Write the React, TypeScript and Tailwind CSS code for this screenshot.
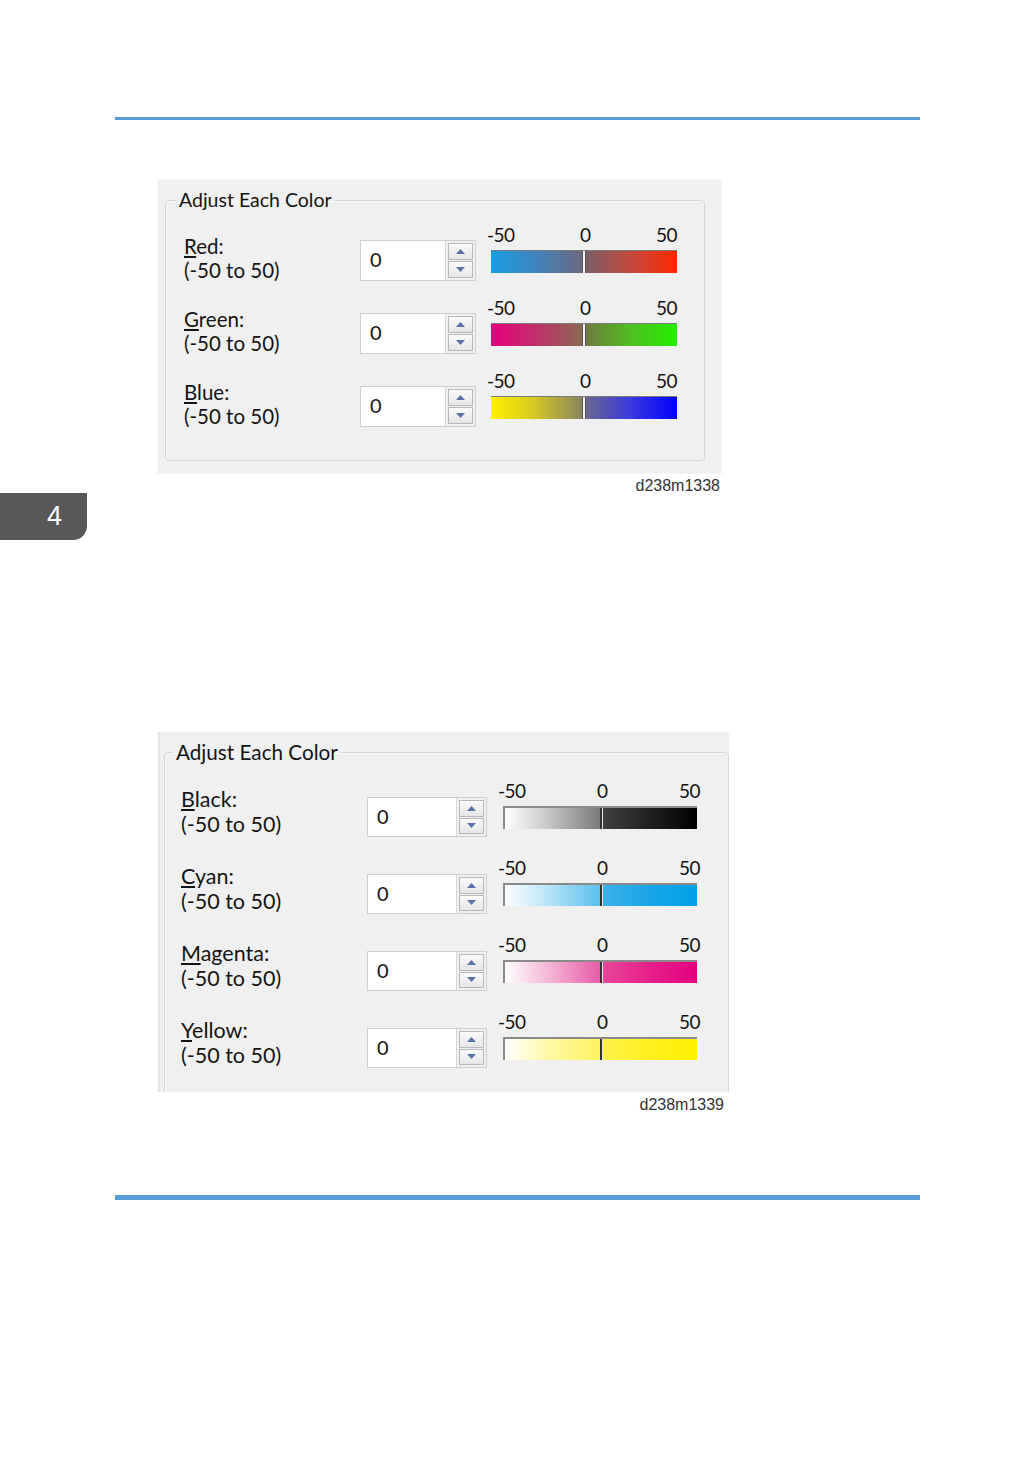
import React from 'react';

type Row = {
  key: string;
  rest: string;
  left: string;
  right: string;
};

const rgbRows: Row[] = [
  {
    key: 'R',
    rest: 'ed:',
    left: 'bg-[linear-gradient(to_right,#169fe4,#3d86c0_45%,#6a6880)]',
    right: 'bg-[linear-gradient(to_right,#7a5e66,#c4483c_50%,#ff2800)]',
  },
  {
    key: 'G',
    rest: 'reen:',
    left: 'bg-[linear-gradient(to_right,#e6007e,#c0306a_50%,#8a6a50)]',
    right: 'bg-[linear-gradient(to_right,#707a40,#50c020_50%,#22f000)]',
  },
  {
    key: 'B',
    rest: 'lue:',
    left: 'bg-[linear-gradient(to_right,#fff000,#d8cc20_45%,#8a8460)]',
    right: 'bg-[linear-gradient(to_right,#6a6890,#3838e0_50%,#0000ff)]',
  },
];

const cmykRows: Row[] = [
  {
    key: 'B',
    rest: 'lack:',
    left: 'bg-[linear-gradient(to_right,#ffffff,#c8c8c8_45%,#7a7a7a)]',
    right: 'bg-[linear-gradient(to_right,#404040,#202020_50%,#000000)]',
  },
  {
    key: 'C',
    rest: 'yan:',
    left: 'bg-[linear-gradient(to_right,#ffffff,#b8e4f8_45%,#5cc0ec)]',
    right: 'bg-[linear-gradient(to_right,#3cb0e8,#18a6e8_50%,#00a0e9)]',
  },
  {
    key: 'M',
    rest: 'agenta:',
    left: 'bg-[linear-gradient(to_right,#ffffff,#f4b8d8_45%,#e85ca8)]',
    right: 'bg-[linear-gradient(to_right,#e8469a,#e6208a_50%,#e4007f)]',
  },
  {
    key: 'Y',
    rest: 'ellow:',
    left: 'bg-[linear-gradient(to_right,#ffffff,#fff8a8_45%,#fff35c)]',
    right: 'bg-[linear-gradient(to_right,#fff24a,#fff020_50%,#fff000)]',
  },
];

function Spinner({ w, h }: { w: string; h: string }) {
  return (
    <div className={`${w} ${h} flex bg-white border border-[#cfcfcf]`}>
      <div className="flex-1 pl-[9px] pt-[6px] text-[20px] leading-[24px] text-[#141414]">0</div>
      <div className="w-[30px] flex flex-col gap-[1px] p-[2px] bg-[#f0f0f0] border-l border-[#d8d8d8]">
        <div className="flex-1 flex items-center justify-center border border-[#b8b8b8] bg-[linear-gradient(#fafafa,#e6e6e6)]">
          <svg width="9" height="5" viewBox="0 0 9 5">
            <path d="M0 5 L4.5 0 L9 5 Z" fill="#5a72a8" />
          </svg>
        </div>
        <div className="flex-1 flex items-center justify-center border border-[#b8b8b8] bg-[linear-gradient(#fafafa,#e6e6e6)]">
          <svg width="9" height="5" viewBox="0 0 9 5">
            <path d="M0 0 L4.5 5 L9 0 Z" fill="#5a72a8" />
          </svg>
        </div>
      </div>
    </div>
  );
}

function Scale({ row, sunken, colW, barW, barMl }: { row: Row; sunken: boolean; colW: string; barW: string; barMl: string }) {
  return (
    <div className={`${colW} flex flex-col`}>
      <div className="flex justify-between text-[19px] leading-[20px] text-[#141414] tracking-[-0.5px]">
        <span>-50</span>
        <span>0</span>
        <span>50</span>
      </div>
      <div
        className={`${barW} ${barMl} mt-[5px] h-[23px] flex ${
          sunken ? 'border-t-2 border-l-2 border-[#8a8a8a]' : 'border-t border-[#7a7a7a]'
        }`}
      >
        <div className={`flex-1 ${row.left}`} />
        {sunken ? (
          <div className="w-[3px] bg-[#e8e8e8] border-l-2 border-[#333333]" />
        ) : (
          <div className="w-[4px] bg-[#f4f4f4] border-x border-[#555555]" />
        )}
        <div className={`flex-1 ${row.right}`} />
      </div>
    </div>
  );
}

function Label({ row, w, mt, size }: { row: Row; w: string; mt: string; size: string }) {
  return (
    <div className={`${w} ${mt} ${size} text-[#141414]`}>
      <div>
        <span className="underline underline-offset-2">{row.key}</span>
        {row.rest}
      </div>
      <div>(-50 to 50)</div>
    </div>
  );
}

export default function App() {
  const font = { fontFamily: 'Lato, "Open Sans", sans-serif' };
  return (
    <div className="w-[1036px] h-[1470px] bg-white overflow-hidden flex flex-col" style={font}>
      <div className="mt-[117px] ml-[115px] w-[805px] h-[3px] bg-[#5b9bd5]" />

      {/* RGB panel */}
      <div className="mt-[59px] ml-[157px] w-[565px] h-[295px] bg-[#f0f0f0] border border-[#f6f6f6] pt-[8px] pl-[7px] pr-[16px]">
        <fieldset className="h-[273px] border border-[#d6d6d6] rounded-[4px] shadow-[inset_1px_1px_0_#fbfbfb] pl-[18px] pt-[13px]">
          <legend className="ml-[-8px] px-[3px] text-[19.5px] leading-[24px] text-[#141414]">
            Adjust Each Color
          </legend>
          <div className="flex flex-col">
            {rgbRows.map((row) => (
              <div key={row.key} className="h-[73px] flex items-start">
                <Label row={row} w="w-[176px]" mt="mt-[9px]" size="text-[20.5px] leading-[24px]" />
                <div className="mt-[15px]">
                  <Spinner w="w-[116px]" h="h-[41px]" />
                </div>
                <div className="ml-[11px]">
                  <Scale row={row} sunken={false} colW="w-[190px]" barW="w-[186px]" barMl="ml-[4px]" />
                </div>
              </div>
            ))}
          </div>
        </fieldset>
      </div>
      <div className="ml-[600px] w-[120px] h-[20px] mt-[2px] text-right text-[16px] leading-[20px] text-[#333333]" style={{ fontFamily: '"Liberation Sans", Arial, sans-serif' }}>
        d238m1338
      </div>

      <div className="mt-[-3px] w-[87px] h-[47px] bg-[#595757] rounded-br-[14px] flex items-center justify-center pl-[22px]">
        <span className="text-white text-[27px] leading-none" style={{ fontFamily: '"Liberation Sans", Arial, sans-serif' }}>4</span>
      </div>

      {/* CMYK panel */}
      <div className="mt-[192px] ml-[158px] w-[571px] h-[360px] bg-[#f0f0f0] border-l-2 border-[#e4e4e4] overflow-hidden pt-[8px] pl-[4px]">
        <fieldset className="h-[420px] w-[565px] border border-[#d6d6d6] rounded-[4px] shadow-[inset_1px_1px_0_#fbfbfb] pl-[16px] pt-[17px]">
          <legend className="ml-[-8px] px-[3px] text-[20.7px] leading-[24px] text-[#141414]">
            Adjust Each Color
          </legend>
          <div className="flex flex-col">
            {cmykRows.map((row) => (
              <div key={row.key} className="h-[77px] flex items-start">
                <Label row={row} w="w-[186px]" mt="mt-[6px]" size="text-[21.5px] leading-[25px]" />
                <div className="mt-[16px]">
                  <Spinner w="w-[120px]" h="h-[40px]" />
                </div>
                <div className="ml-[11px]">
                  <Scale row={row} sunken={true} colW="w-[202px]" barW="w-[194px]" barMl="ml-[5px]" />
                </div>
              </div>
            ))}
          </div>
        </fieldset>
      </div>
      <div className="ml-[604px] w-[120px] h-[20px] mt-[3px] text-right text-[16px] leading-[20px] text-[#333333]" style={{ fontFamily: '"Liberation Sans", Arial, sans-serif' }}>
        d238m1339
      </div>

      <div className="mt-[80px] ml-[115px] w-[805px] h-[5px] bg-[#5b9bd5]" />
    </div>
  );
}
